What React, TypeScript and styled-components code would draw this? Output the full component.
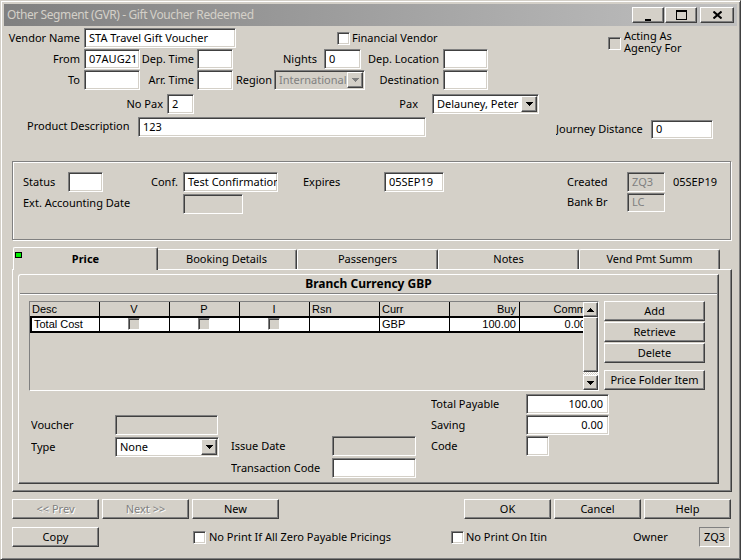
import React from 'react';
import styled, { createGlobalStyle, css } from 'styled-components';

const FONT = `"Noto Sans", "DejaVu Sans", sans-serif`;
const GRID_FONT = `"Liberation Sans", Arial, sans-serif`;

const GlobalStyle = createGlobalStyle`
  html, body { margin: 0; padding: 0; background: #d4d0c8; }
  #root { width: 741px; height: 560px; }
`;

const raised = css`
  border: 1px solid;
  border-color: #fff #404040 #404040 #fff;
  box-shadow: inset -1px -1px 0 #808080;
`;

const sunken = css`
  border: 1px solid;
  border-color: #808080 #fff #fff #808080;
  box-shadow: inset 1px 1px 0 #404040, inset -1px -1px 0 #d4d0c8;
`;

const Window = styled.div`
  box-sizing: border-box;
  width: 741px;
  height: 560px;
  background: #d4d0c8;
  border: 1px solid;
  border-color: #d4d0c8 #404040 #404040 #d4d0c8;
  box-shadow: inset 1px 1px 0 #fff, inset -1px -1px 0 #808080;
  padding: 3px;
  display: flex;
  flex-direction: column;
  font-family: ${FONT};
  font-size: 11px;
  color: #000;
  overflow: hidden;
`;

const TitleBar = styled.div`
  flex: none;
  height: 22px;
  display: flex;
  align-items: center;
  padding: 0 3px 0 3px;
  background: linear-gradient(to right, #808080, #c0c0c0);
`;

const TitleText = styled.span`
  color: #d4d0c8;
  font-size: 12px;
  letter-spacing: -0.4px;
  white-space: nowrap;
  padding-bottom: 1px;
`;

const CaptionButton = styled.div<{ $w: number; $ml: number }>`
  flex: none;
  box-sizing: border-box;
  width: ${p => p.$w}px;
  height: 16px;
  margin-left: ${p => (p.$ml < 0 ? 'auto' : `${p.$ml}px`)};
  background: #d4d0c8;
  ${raised};
  display: flex;
  align-items: center;
  justify-content: center;
`;

const Body = styled.div`
  flex: 1;
  display: flex;
  flex-direction: column;
`;

const FormRow = styled.div<{ $h: number; $mt: number }>`
  flex: none;
  display: flex;
  align-items: center;
  height: ${p => p.$h}px;
  margin-top: ${p => p.$mt}px;
`;

const Label = styled.span<{
  $w?: number;
  $ml?: number;
  $align?: 'left' | 'right' | 'center';
  $self?: string;
  $h?: number;
  $bold?: boolean;
}>`
  flex: none;
  box-sizing: border-box;
  ${p => (p.$w ? `width: ${p.$w}px;` : '')}
  margin-left: ${p => p.$ml ?? 0}px;
  text-align: ${p => p.$align ?? 'left'};
  align-self: ${p => p.$self ?? 'center'};
  ${p => (p.$h ? `height: ${p.$h}px; line-height: ${p.$h - 2}px;` : 'padding-bottom: 2px;')}
  font-weight: ${p => (p.$bold ? 700 : 400)};
  white-space: nowrap;
  overflow: hidden;
`;

const Field = styled.div<{
  $w: number;
  $h?: number;
  $ml?: number;
  $disabled?: boolean;
  $right?: boolean;
  $center?: boolean;
  $self?: string;
  $combo?: boolean;
}>`
  flex: none;
  box-sizing: border-box;
  width: ${p => p.$w}px;
  height: ${p => p.$h ?? 20}px;
  margin-left: ${p => p.$ml ?? 0}px;
  align-self: ${p => p.$self ?? 'center'};
  background: ${p => (p.$disabled ? '#d4d0c8' : '#fff')};
  color: ${p => (p.$disabled ? '#808080' : '#000')};
  ${sunken};
  display: flex;
  align-items: center;
  justify-content: ${p => (p.$right ? 'flex-end' : p.$center ? 'center' : 'flex-start')};
  padding: 0 ${p => (p.$combo ? 1 : p.$right ? 5 : 3)}px ${p => (p.$combo ? 0 : 2)}px ${p => (p.$center ? 0 : 4)}px;
  overflow: hidden;
  white-space: nowrap;
`;

const ComboText = styled.span`
  flex: 1;
  overflow: hidden;
  padding-bottom: 2px;
`;

const DropButton = styled.span`
  flex: none;
  box-sizing: border-box;
  width: 16px;
  height: 16px;
  background: #d4d0c8;
  ${raised};
  display: flex;
  align-items: center;
  justify-content: center;
`;

const CheckBox = styled.span<{ $ml?: number; $gray?: boolean; $mt?: number; $size?: number }>`
  flex: none;
  box-sizing: border-box;
  width: ${p => p.$size ?? 13}px;
  height: ${p => p.$size ?? 13}px;
  margin-left: ${p => p.$ml ?? 0}px;
  margin-top: ${p => p.$mt ?? 0}px;
  background: ${p => (p.$gray ? '#d4d0c8' : '#fff')};
  ${sunken};
`;

const ActingBlock = styled.div<{ $ml: number }>`
  flex: none;
  align-self: flex-start;
  display: flex;
  align-items: flex-start;
  margin-left: ${p => p.$ml}px;
`;

const ActingText = styled.span`
  margin-left: 3px;
  margin-top: 2px;
  line-height: 12px;
`;

const GroupBox = styled.div`
  flex: none;
  box-sizing: border-box;
  width: 719px;
  height: 79px;
  margin: 22px 0 0 8px;
  border: 1px solid #808080;
  box-shadow: inset 1px 1px 0 #fff, 1px 1px 0 #fff;
  display: flex;
  flex-direction: column;
`;

const TabControl = styled.div`
  flex: none;
  width: 720px;
  height: 245px;
  margin: 7px 0 0 8px;
  display: flex;
  flex-direction: column;
`;

const TabStrip = styled.div`
  flex: none;
  height: 22px;
  display: flex;
  align-items: flex-end;
  padding-left: 3px;
`;

const Tab = styled.div<{ $active?: boolean }>`
  position: relative;
  flex: none;
  box-sizing: border-box;
  width: ${p => (p.$active ? 145 : 141)}px;
  height: ${p => (p.$active ? 23 : 20)}px;
  margin: 0 ${p => (p.$active ? -2 : 0)}px ${p => (p.$active ? -1 : 0)}px;
  z-index: ${p => (p.$active ? 1 : 0)};
  background: #d4d0c8;
  border-top: 1px solid #fff;
  border-left: 1px solid #fff;
  border-right: 1px solid #404040;
  box-shadow: inset -1px 0 0 #808080;
  border-radius: 2px 2px 0 0;
  display: flex;
  align-items: center;
  justify-content: center;
  padding-bottom: ${p => (p.$active ? 2 : 2)}px;
  font-weight: ${p => (p.$active ? 700 : 400)};
`;

const TabMarker = styled.span`
  position: absolute;
  left: 1px;
  top: 4px;
  box-sizing: border-box;
  width: 7px;
  height: 6px;
  border: 1px solid #000;
  background: #00f000;
`;

const TabPanel = styled.div`
  flex: 1;
  box-sizing: border-box;
  border-top: 1px solid #fff;
  border-left: 1px solid #fff;
  border-right: 1px solid #404040;
  border-bottom: 1px solid #404040;
  box-shadow: inset -1px -1px 0 #808080;
  display: flex;
  flex-direction: column;
`;

const InnerBox = styled.div`
  flex: none;
  box-sizing: border-box;
  width: 701px;
  height: 210px;
  margin: 4px 0 0 5px;
  border-top: 1px solid #fff;
  border-left: 1px solid #fff;
  border-right: 1px solid #404040;
  border-bottom: 1px solid #404040;
  box-shadow: inset -1px -1px 0 #808080;
  border-top-left-radius: 3px;
  display: flex;
  flex-direction: column;
`;

const BoxTitle = styled.div`
  flex: none;
  height: 18px;
  box-sizing: border-box;
  padding-bottom: 2px;
  display: flex;
  align-items: center;
  justify-content: center;
  font-weight: 700;
  font-size: 12px;
`;

const Separator = styled.div`
  flex: none;
  height: 0;
  margin: 0 1px;
  border-top: 1px solid #808080;
  border-bottom: 1px solid #fff;
`;

const GridArea = styled.div`
  flex: none;
  display: flex;
  align-items: flex-start;
  margin: 6px 0 0 10px;
`;

const GridFrame = styled.div`
  flex: none;
  box-sizing: border-box;
  width: 570px;
  height: 90px;
  border: 1px solid;
  border-color: #808080 #fff #fff #808080;
  background: #d4d0c8;
  display: flex;
`;

const GridTable = styled.div`
  flex: 1;
  overflow: hidden;
  display: flex;
  flex-direction: column;
  font-family: ${GRID_FONT};
  font-size: 11px;
`;

const GridRow = styled.div<{ $head?: boolean }>`
  flex: none;
  box-sizing: border-box;
  width: 560px;
  height: ${p => (p.$head ? 16 : 15)}px;
  display: flex;
  background: ${p => (p.$head ? '#d4d0c8' : '#fff')};
  border-bottom: 2px solid #000;
  ${p => (p.$head ? '' : 'border-left: 2px solid #000;')}
`;

const Cell = styled.div<{ $w: number; $align?: 'left' | 'center' | 'right' }>`
  flex: none;
  box-sizing: border-box;
  width: ${p => p.$w}px;
  border-right: 1px solid #000;
  padding: 0 3px 1px 2px;
  display: flex;
  align-items: center;
  justify-content: ${p => (p.$align === 'center' ? 'center' : p.$align === 'right' ? 'flex-end' : 'flex-start')};
  overflow: hidden;
  white-space: nowrap;
`;

const ScrollBar = styled.div`
  flex: none;
  width: 15px;
  display: flex;
  flex-direction: column;
`;

const ScrollButton = styled.div<{ $h: number }>`
  flex: none;
  box-sizing: border-box;
  height: ${p => p.$h}px;
  background: #d4d0c8;
  ${raised};
  display: flex;
  align-items: center;
  justify-content: center;
`;

const ScrollTrack = styled.div`
  flex: 1;
  background: repeating-conic-gradient(#d4d0c8 0 25%, #fff 0 50%) 0 0 / 2px 2px;
`;

const SideButtons = styled.div`
  flex: none;
  width: 101px;
  margin-left: 5px;
  display: flex;
  flex-direction: column;
`;

const Button = styled.button<{ $w: number; $ml?: number; $mt?: number }>`
  flex: none;
  box-sizing: border-box;
  width: ${p => p.$w}px;
  height: 20px;
  margin: ${p => p.$mt ?? 0}px 0 0 ${p => p.$ml ?? 0}px;
  padding: 0 0 2px;
  background: #d4d0c8;
  ${raised};
  font-family: ${FONT};
  font-size: 11px;
  color: #000;
  &:disabled {
    color: #808080;
    text-shadow: 1px 1px 0 #fff;
  }
`;

const LowerArea = styled.div`
  flex: none;
  display: flex;
  margin-top: 3px;
`;

const LowerColumn = styled.div<{ $ml: number; $w: number; $pt: number; $gap: number }>`
  flex: none;
  width: ${p => p.$w}px;
  margin-left: ${p => p.$ml}px;
  padding-top: ${p => p.$pt}px;
  display: flex;
  flex-direction: column;
  gap: ${p => p.$gap}px;
`;

const LowerRow = styled.div`
  display: flex;
  align-items: center;
  height: 20px;
`;

const StaticBox = styled.div<{ $w: number }>`
  flex: none;
  box-sizing: border-box;
  width: ${p => p.$w}px;
  height: 20px;
  border: 1px solid;
  border-color: #808080 #fff #fff #808080;
  padding-bottom: 2px;
  display: flex;
  align-items: center;
  justify-content: center;
`;

const Arrow = ({ up, color = '#000' }: { up?: boolean; color?: string }) => (
  <svg width="7" height="4" viewBox="0 0 7 4" style={{ display: 'block' }}>
    {up ? (
      <path d="M0 4h7v-1h-1v-1h-1v-1h-1v-1h-1v1h-1v1h-1v1h-1z" fill={color} />
    ) : (
      <path d="M0 0h7v1h-1v1h-1v1h-1v1h-1v-1h-1v-1h-1v-1h-1z" fill={color} />
    )}
  </svg>
);

const Combo = ({ w, ml, text, disabled }: { w: number; ml: number; text: string; disabled?: boolean }) => (
  <Field $w={w} $ml={ml} $disabled={disabled} $combo>
    <ComboText>{text}</ComboText>
    <DropButton>
      <Arrow color={disabled ? '#808080' : '#000'} />
    </DropButton>
  </Field>
);

const columns: { name: string; align: 'left' | 'center' | 'right' }[] = [
  { name: 'Desc', align: 'left' },
  { name: 'V', align: 'center' },
  { name: 'P', align: 'center' },
  { name: 'I', align: 'center' },
  { name: 'Rsn', align: 'left' },
  { name: 'Curr', align: 'left' },
  { name: 'Buy', align: 'right' },
  { name: 'Comm', align: 'right' },
];

const tabs = ['Price', 'Booking Details', 'Passengers', 'Notes', 'Vend Pmt Summ'];

export default function App() {
  return (
    <>
      <GlobalStyle />
      <Window>
        <TitleBar>
          <TitleText>Other Segment (GVR) - Gift Voucher Redeemed</TitleText>
          <CaptionButton $w={32} $ml={-1}>
            <svg width="8" height="9" viewBox="0 0 8 9" style={{ marginTop: 3 }}>
              <rect x="1" y="7" width="6" height="2" fill="#000" />
            </svg>
          </CaptionButton>
          <CaptionButton $w={32} $ml={1}>
            <svg width="11" height="10" viewBox="0 0 11 10">
              <path d="M0 0h11v10h-11z M1 2v7h9v-7z" fill="#000" fillRule="evenodd" />
            </svg>
          </CaptionButton>
          <CaptionButton $w={34} $ml={3}>
            <svg width="9" height="8" viewBox="0 0 9 8">
              <path d="M0.5 0.5L8.5 7.5M8.5 0.5L0.5 7.5" stroke="#000" strokeWidth="2" />
            </svg>
          </CaptionButton>
        </TitleBar>
        <Body>
          <FormRow $h={20} $mt={2}>
            <Label $w={76} $align="right">Vendor Name</Label>
            <Field $w={152} $ml={4}>STA Travel Gift Voucher</Field>
            <CheckBox $ml={101} />
            <Label $ml={2} $w={100}>Financial Vendor</Label>
            <ActingBlock $ml={156}>
              <CheckBox $gray $mt={9} />
              <ActingText>
                Acting As
                <br />
                Agency For
              </ActingText>
            </ActingBlock>
          </FormRow>
          <FormRow $h={20} $mt={1}>
            <Label $w={76} $align="right">From</Label>
            <Field $w={56} $ml={4}>07AUG21</Field>
            <Label $w={54} $align="right">Dep. Time</Label>
            <Field $w={36} $ml={3} />
            <Label $w={84} $align="right">Nights</Label>
            <Field $w={37} $ml={7}>0</Field>
            <Label $w={78} $align="right">Dep. Location</Label>
            <Field $w={45} $ml={4} />
          </FormRow>
          <FormRow $h={20} $mt={1}>
            <Label $w={76} $align="right">To</Label>
            <Field $w={56} $ml={4} />
            <Label $w={54} $align="right">Arr. Time</Label>
            <Field $w={36} $ml={3} />
            <Label $w={39} $align="right">Region</Label>
            <Combo w={91} ml={2} text="International" disabled />
            <Label $w={74} $align="right">Destination</Label>
            <Field $w={45} $ml={4} />
          </FormRow>
          <FormRow $h={20} $mt={4}>
            <Label $w={159} $align="right">No Pax</Label>
            <Field $w={27} $ml={4}>2</Field>
            <Label $w={224} $align="right">Pax</Label>
            <Combo w={107} ml={14} text="Delauney, Peter" />
          </FormRow>
          <FormRow $h={22} $mt={3}>
            <Label $ml={23} $w={111} $self="flex-start" $h={20}>Product Description</Label>
            <Field $w={288} $self="flex-start">123</Field>
            <Label $ml={130} $w={95} $self="flex-end" $h={19}>Journey Distance</Label>
            <Field $w={62} $h={19} $self="flex-end">0</Field>
          </FormRow>

          <GroupBox>
            <FormRow $h={20} $mt={10}>
              <Label $ml={10} $w={45}>Status</Label>
              <Field $w={35} />
              <Label $ml={48} $w={32}>Conf.</Label>
              <Field $w={95}>Test Confirmation</Field>
              <Label $ml={25} $w={81}>Expires</Label>
              <Field $w={60}>05SEP19</Field>
              <Label $ml={123} $w={60}>Created</Label>
              <Field $w={38} $disabled>ZQ3</Field>
              <Label $ml={8}>05SEP19</Label>
            </FormRow>
            <FormRow $h={21} $mt={1}>
              <Label $ml={10} $w={160}>Ext. Accounting Date</Label>
              <Field $w={60} $disabled $self="flex-end" />
              <Label $ml={324} $w={60} $self="flex-start" $h={20}>Bank Br</Label>
              <Field $w={38} $h={19} $disabled $self="flex-start">LC</Field>
            </FormRow>
          </GroupBox>

          <TabControl>
            <TabStrip>
              {tabs.map((t, i) => (
                <Tab key={t} $active={i === 0}>
                  {i === 0 && <TabMarker />}
                  {t}
                </Tab>
              ))}
            </TabStrip>
            <TabPanel>
              <InnerBox>
                <BoxTitle>Branch Currency GBP</BoxTitle>
                <Separator />
                <GridArea>
                  <GridFrame>
                    <GridTable>
                      <GridRow $head>
                        {columns.map(c => (
                          <Cell key={c.name} $w={70} $align={c.align}>
                            {c.name}
                          </Cell>
                        ))}
                      </GridRow>
                      <GridRow>
                        <Cell $w={68}>Total Cost</Cell>
                        <Cell $w={70} $align="center"><CheckBox $gray $size={12} /></Cell>
                        <Cell $w={70} $align="center"><CheckBox $gray $size={12} /></Cell>
                        <Cell $w={70} $align="center"><CheckBox $gray $size={12} /></Cell>
                        <Cell $w={70} />
                        <Cell $w={70}>GBP</Cell>
                        <Cell $w={70} $align="right">100.00</Cell>
                        <Cell $w={70} $align="right">0.00</Cell>
                      </GridRow>
                    </GridTable>
                    <ScrollBar>
                      <ScrollButton $h={15}><Arrow up /></ScrollButton>
                      <ScrollButton $h={55} />
                      <ScrollTrack />
                      <ScrollButton $h={15}><Arrow /></ScrollButton>
                    </ScrollBar>
                  </GridFrame>
                  <SideButtons>
                    <Button $w={101}>Add</Button>
                    <Button $w={101} $mt={1}>Retrieve</Button>
                    <Button $w={101} $mt={1}>Delete</Button>
                    <Button $w={101} $mt={7}>Price Folder Item</Button>
                  </SideButtons>
                </GridArea>
                <LowerArea>
                  <LowerColumn $ml={12} $w={187} $pt={21} $gap={2}>
                    <LowerRow>
                      <Label $w={84}>Voucher</Label>
                      <Field $w={103} $disabled />
                    </LowerRow>
                    <LowerRow>
                      <Label $w={84}>Type</Label>
                      <Combo w={104} ml={0} text="None" />
                    </LowerRow>
                  </LowerColumn>
                  <LowerColumn $ml={13} $w={185} $pt={42} $gap={2}>
                    <LowerRow>
                      <Label $w={101}>Issue Date</Label>
                      <Field $w={84} $disabled />
                    </LowerRow>
                    <LowerRow>
                      <Label $w={101}>Transaction Code</Label>
                      <Field $w={84} />
                    </LowerRow>
                  </LowerColumn>
                  <LowerColumn $ml={15} $w={178} $pt={0} $gap={1}>
                    <LowerRow>
                      <Label $w={95}>Total Payable</Label>
                      <Field $w={83} $right>100.00</Field>
                    </LowerRow>
                    <LowerRow>
                      <Label $w={95}>Saving</Label>
                      <Field $w={83} $right>0.00</Field>
                    </LowerRow>
                    <LowerRow>
                      <Label $w={95}>Code</Label>
                      <Field $w={23} />
                    </LowerRow>
                  </LowerColumn>
                </LowerArea>
              </InnerBox>
            </TabPanel>
          </TabControl>

          <FormRow $h={20} $mt={7}>
            <Button $w={87} $ml={8} disabled>&lt;&lt; Prev</Button>
            <Button $w={87} $ml={3} disabled>Next &gt;&gt;</Button>
            <Button $w={87} $ml={3}>New</Button>
            <Button $w={87} $ml={185}>OK</Button>
            <Button $w={87} $ml={3}>Cancel</Button>
            <Button $w={87} $ml={3}>Help</Button>
          </FormRow>
          <FormRow $h={20} $mt={8}>
            <Button $w={87} $ml={8}>Copy</Button>
            <CheckBox $ml={94} />
            <Label $ml={3} $w={242}>No Print If All Zero Payable Pricings</Label>
            <CheckBox />
            <Label $ml={2} $w={167}>No Print On Itin</Label>
            <Label $w={66}>Owner</Label>
            <StaticBox $w={31}>ZQ3</StaticBox>
          </FormRow>
        </Body>
      </Window>
    </>
  );
}
